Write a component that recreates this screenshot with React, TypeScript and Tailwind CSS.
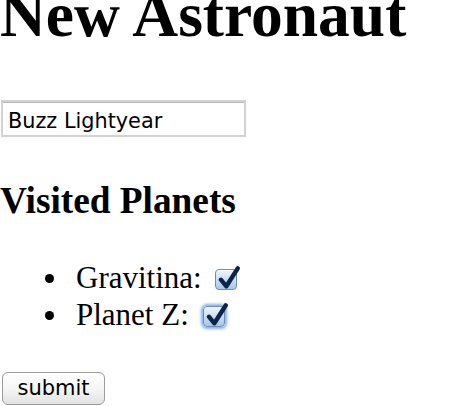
import React from "react";

function Check({ focus }: { focus?: boolean }) {
  return (
    <span
      className={
        "relative inline-block w-[22px] h-[21px] align-[-2px] ml-[6px] rounded-[4px] border border-[#6f8db5] bg-gradient-to-b from-[#eef5fd] via-[#c9def6] to-[#a7c6ee] " +
        (focus ? "shadow-[0_0_3px_2px_rgba(90,150,225,0.75)]" : "shadow-[inset_0_1px_0_rgba(255,255,255,0.8)]")
      }
    >
      <svg
        viewBox="0 0 22 21"
        width="24"
        height="24"
        className="absolute left-[0px] top-[-5px] overflow-visible"
      >
        <path
          d="M4.5 13 L9.5 19 L20 2.5"
          fill="none"
          stroke="#0c2547"
          strokeWidth="4"
          strokeLinecap="round"
          strokeLinejoin="round"
        />
      </svg>
    </span>
  );
}

export default function App() {
  return (
    <div className="bg-white w-[454px] h-[406px] overflow-hidden text-black font-['Liberation_Serif',serif]">
      <h1 className="text-[63.5px] leading-[62px] font-bold mt-[-16px] whitespace-nowrap">New Astronaut</h1>
      <input
        type="text"
        defaultValue="Buzz Lightyear"
        className="block mt-[54px] ml-[1px] w-[245px] h-[37px] border-2 border-[#d2d2d2] shadow-[inset_0_1px_0_#b8b8b8] pl-[5px] pt-[5px] pb-0 text-[20.8px] font-['DejaVu_Sans',sans-serif] outline-none bg-white"
      />
      <h2 className="mt-[45px] text-[37.3px] leading-[37px] font-bold whitespace-nowrap">Visited Planets</h2>
      <ul className="mt-[40px] text-[31px] leading-[37px]">
        <li className="whitespace-nowrap">
          <span className="inline-block w-[9px] h-[9px] rounded-full bg-black align-[5px] ml-[45px] mr-[22px]" />
          Gravitina: <Check />
        </li>
        <li className="whitespace-nowrap">
          <span className="inline-block w-[9px] h-[9px] rounded-full bg-black align-[5px] ml-[45px] mr-[22px]" />
          Planet Z: <Check focus />
        </li>
      </ul>
      <button className="block mt-[39px] ml-[2px] w-[103px] h-[33px] rounded-[6px] border border-[#9c9c9c] bg-gradient-to-b from-white via-[#f6f6f6] to-[#e2e2e2] text-[21px] leading-none font-['DejaVu_Sans',sans-serif] text-black">
        submit
      </button>
    </div>
  );
}
